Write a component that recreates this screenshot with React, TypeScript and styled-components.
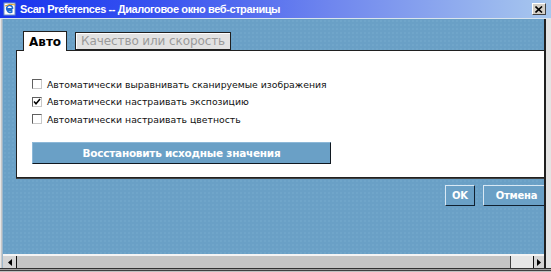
import React from "react";
import styled, { createGlobalStyle } from "styled-components";

const Global = createGlobalStyle`
  html, body { margin: 0; padding: 0; background: #d4d0c8; }
  body { width: 551px; height: 272px; overflow: hidden; }
`;

const Window = styled.div`
  width: 551px;
  height: 272px;
  display: flex;
  flex-direction: column;
  background: #d4d0c8;
  overflow: hidden;
`;

const TitleBar = styled.div`
  height: 18px;
  flex: none;
  display: flex;
  align-items: center;
  padding: 0 4px 0 3px;
  background: linear-gradient(to right, #1634ee 0%, #3a55f0 30%, #6f86ee 60%, #a8c8ee 100%);
  border-bottom: 1px solid #d8e4ee;
`;

const TitleIcon = styled.svg`
  width: 14px;
  height: 14px;
  flex: none;
`;

const TitleText = styled.span`
  margin-left: 3px;
  font-family: "Liberation Sans", Arial, sans-serif;
  font-weight: bold;
  font-size: 11px;
  letter-spacing: -0.4px;
  color: #ffffff;
  white-space: nowrap;
  flex: 1;
`;

const CloseButton = styled.div`
  width: 14px;
  height: 12px;
  box-sizing: border-box;
  background: #d4d0c8;
  border: 1px solid;
  border-color: #ffffff #404040 #404040 #ffffff;
  display: flex;
  align-items: center;
  justify-content: center;
  margin-right: 1px;
`;

const Middle = styled.div`
  flex: 1;
  display: flex;
  min-height: 0;
`;

const LeftFrame = styled.div`
  width: 3px;
  flex: none;
  background: linear-gradient(to right, #e8e8e8 0 1px, #c8c8c8 1px 2px, #9fb8cc 2px);
`;

const RightFrame = styled.div`
  width: 7px;
  flex: none;
  background: linear-gradient(to right, #202020 0 2px, #e4e4e4 2px);
`;

const Viewport = styled.div`
  flex: 1;
  display: flex;
  flex-direction: column;
  overflow: hidden;
  min-width: 0;
`;

const Body = styled.div`
  flex: 1;
  background-color: #6aa0c6;
  background-image: radial-gradient(rgba(140, 184, 214, 0.6) 0.5px, transparent 0.8px);
  background-size: 4px 4px;
  overflow: hidden;
`;

const Page = styled.div`
  width: 547px;
  padding: 12px 0 0 13px;
  display: flex;
  flex-direction: column;
`;

const Tabs = styled.div`
  display: flex;
  align-items: flex-end;
  gap: 8px;
  padding-left: 7px;
  height: 19px;
  position: relative;
  z-index: 1;
`;

const Tab = styled.div<{ $active?: boolean }>`
  box-sizing: border-box;
  height: ${(p) => (p.$active ? "20px" : "18px")};
  margin-bottom: ${(p) => (p.$active ? "-1px" : "0")};
  padding: 0 5px;
  display: flex;
  align-items: center;
  border: 1px solid #202020;
  border-bottom: ${(p) => (p.$active ? "none" : "1px solid #202020")};
  background: ${(p) => (p.$active ? "#ffffff" : "#e2e2e2")};
  color: ${(p) => (p.$active ? "#000000" : "#9a9a9a")};
  font-family: "DejaVu Sans", Verdana, sans-serif;
  font-weight: ${(p) => (p.$active ? "bold" : "normal")};
  font-size: 12px;
  letter-spacing: ${(p) => (p.$active ? "0" : "-0.1px")};
  white-space: nowrap;
  box-shadow: ${(p) => (p.$active ? "none" : "inset 1px 1px 0 #ffffff")};
`;

const Panel = styled.div`
  box-sizing: border-box;
  height: 128px;
  background: #ffffff;
  border-top: 1px solid #202020;
  border-left: 1px solid #202020;
  border-bottom: 1px solid #202020;
  box-shadow: 0 1px 0 #404040;
  padding: 28px 0 0 15px;
  display: flex;
  flex-direction: column;
`;

const Options = styled.div`
  display: flex;
  flex-direction: column;
  gap: 7px;
`;

const OptionRow = styled.label`
  display: flex;
  align-items: center;
  height: 10.5px;
  font-family: "DejaVu Sans", Verdana, sans-serif;
  font-size: 9.3px;
  color: #101010;
  white-space: nowrap;
`;

const CheckBox = styled.span`
  width: 10px;
  height: 10px;
  box-sizing: border-box;
  flex: none;
  border: 1px solid;
  border-color: #606060 #c8c8c8 #c8c8c8 #606060;
  background: #ffffff;
  margin-right: 5px;
  display: flex;
  align-items: center;
  justify-content: center;
`;

const ResetButton = styled.div`
  margin-top: 17px;
  width: 299px;
  height: 22px;
  box-sizing: border-box;
  background: #6aa0c6;
  border: 1px solid;
  border-color: #8cb8d8 #101820 #101820 #8cb8d8;
  display: flex;
  align-items: center;
  justify-content: center;
  font-family: "DejaVu Sans", Verdana, sans-serif;
  font-weight: bold;
  font-size: 10.5px;
  letter-spacing: -0.25px;
  color: #ffffff;
  white-space: nowrap;
`;

const ButtonRow = styled.div`
  display: flex;
  justify-content: flex-end;
  gap: 8px;
  margin-top: 7px;
  padding-right: 13px;
`;

const DlgButton = styled.div<{ $w: number }>`
  width: ${(p) => p.$w}px;
  height: 21px;
  box-sizing: border-box;
  background: #6aa0c6;
  border: 1px solid;
  border-color: #d8e8f4 #102030 #102030 #d8e8f4;
  display: flex;
  align-items: center;
  justify-content: center;
  font-family: "DejaVu Sans", Verdana, sans-serif;
  font-weight: bold;
  font-size: 10px;
  letter-spacing: -0.2px;
  color: #ffffff;
`;

const ScrollBar = styled.div`
  height: 14px;
  flex: none;
  display: flex;
  background: #c4c4c4;
  border-top: 2px solid #f4f4f4;
  box-sizing: border-box;
`;

const ArrowButton = styled.div<{ $side: "left" | "right" }>`
  width: ${(p) => (p.$side === "left" ? "13px" : "10px")};
  flex: none;
  background: #d4d4d4;
  border-${(p) => (p.$side === "left" ? "right" : "left")}: 1px solid #101010;
  display: flex;
  align-items: center;
  justify-content: center;
`;

const Track = styled.div`
  flex: 1;
  background: #c4c4c4;
`;

const Thumb = styled.div`
  width: 22px;
  flex: none;
  background: #e6e6e6;
  border-left: 1px solid #404040;
`;

const BottomFrame = styled.div`
  height: 4px;
  flex: none;
  background: linear-gradient(#303030 0 1px, #a0a0a0 1px 2px, #404040 2px 3px, #c0c0c0 3px);
`;

export default function App() {
  const options = [
    { label: "Автоматически выравнивать сканируемые изображения", checked: false },
    { label: "Автоматически настраивать экспозицию", checked: true },
    { label: "Автоматически настраивать цветность", checked: false },
  ];
  return (
    <>
      <Global />
      <Window>
        <TitleBar>
          <TitleIcon viewBox="0 0 14 14">
            <rect x="1" y="1" width="11" height="12" fill="#ffffff" stroke="#7090c0" strokeWidth="1" />
            <path d="M9.5 8.2 H4.2 A3 3 0 1 1 9.6 6.8 M4.3 6.9 H9.3 M4.4 8.6 A3 3 0 0 0 9.4 9.4" fill="none" stroke="#1e6ad0" strokeWidth="1.6" />
            <path d="M2 4 Q7 1 12.5 3" fill="none" stroke="#e0a020" strokeWidth="1" />
          </TitleIcon>
          <TitleText>Scan Preferences -- Диалоговое окно веб-страницы</TitleText>
          <CloseButton>
            <svg width="8" height="7" viewBox="0 0 8 7">
              <path d="M0.5 0.5 L7 6.5 M7 0.5 L0.5 6.5" stroke="#000" strokeWidth="1.6" />
            </svg>
          </CloseButton>
        </TitleBar>
        <Middle>
          <LeftFrame />
          <Viewport>
            <Body>
              <Page>
                <Tabs>
                  <Tab $active>Авто</Tab>
                  <Tab>Качество или скорость</Tab>
                </Tabs>
                <Panel>
                  <Options>
                    {options.map((o) => (
                      <OptionRow key={o.label}>
                        <CheckBox>
                          {o.checked && (
                            <svg width="8" height="8" viewBox="0 0 8 8">
                              <path d="M1 3.5 L3 5.8 L7 1" fill="none" stroke="#000" strokeWidth="1.5" />
                            </svg>
                          )}
                        </CheckBox>
                        {o.label}
                      </OptionRow>
                    ))}
                  </Options>
                  <ResetButton>Восстановить исходные значения</ResetButton>
                </Panel>
                <ButtonRow>
                  <DlgButton $w={30}>OK</DlgButton>
                  <DlgButton $w={67}>Отмена</DlgButton>
                </ButtonRow>
              </Page>
            </Body>
            <ScrollBar>
              <ArrowButton $side="left">
                <svg width="4" height="7" viewBox="0 0 4 7">
                  <path d="M4 0 L0 3.5 L4 7 Z" fill="#000" />
                </svg>
              </ArrowButton>
              <Track />
              <Thumb />
              <ArrowButton $side="right">
                <svg width="4" height="7" viewBox="0 0 4 7">
                  <path d="M0 0 L4 3.5 L0 7 Z" fill="#000" />
                </svg>
              </ArrowButton>
            </ScrollBar>
          </Viewport>
          <RightFrame />
        </Middle>
        <BottomFrame />
      </Window>
    </>
  );
}
